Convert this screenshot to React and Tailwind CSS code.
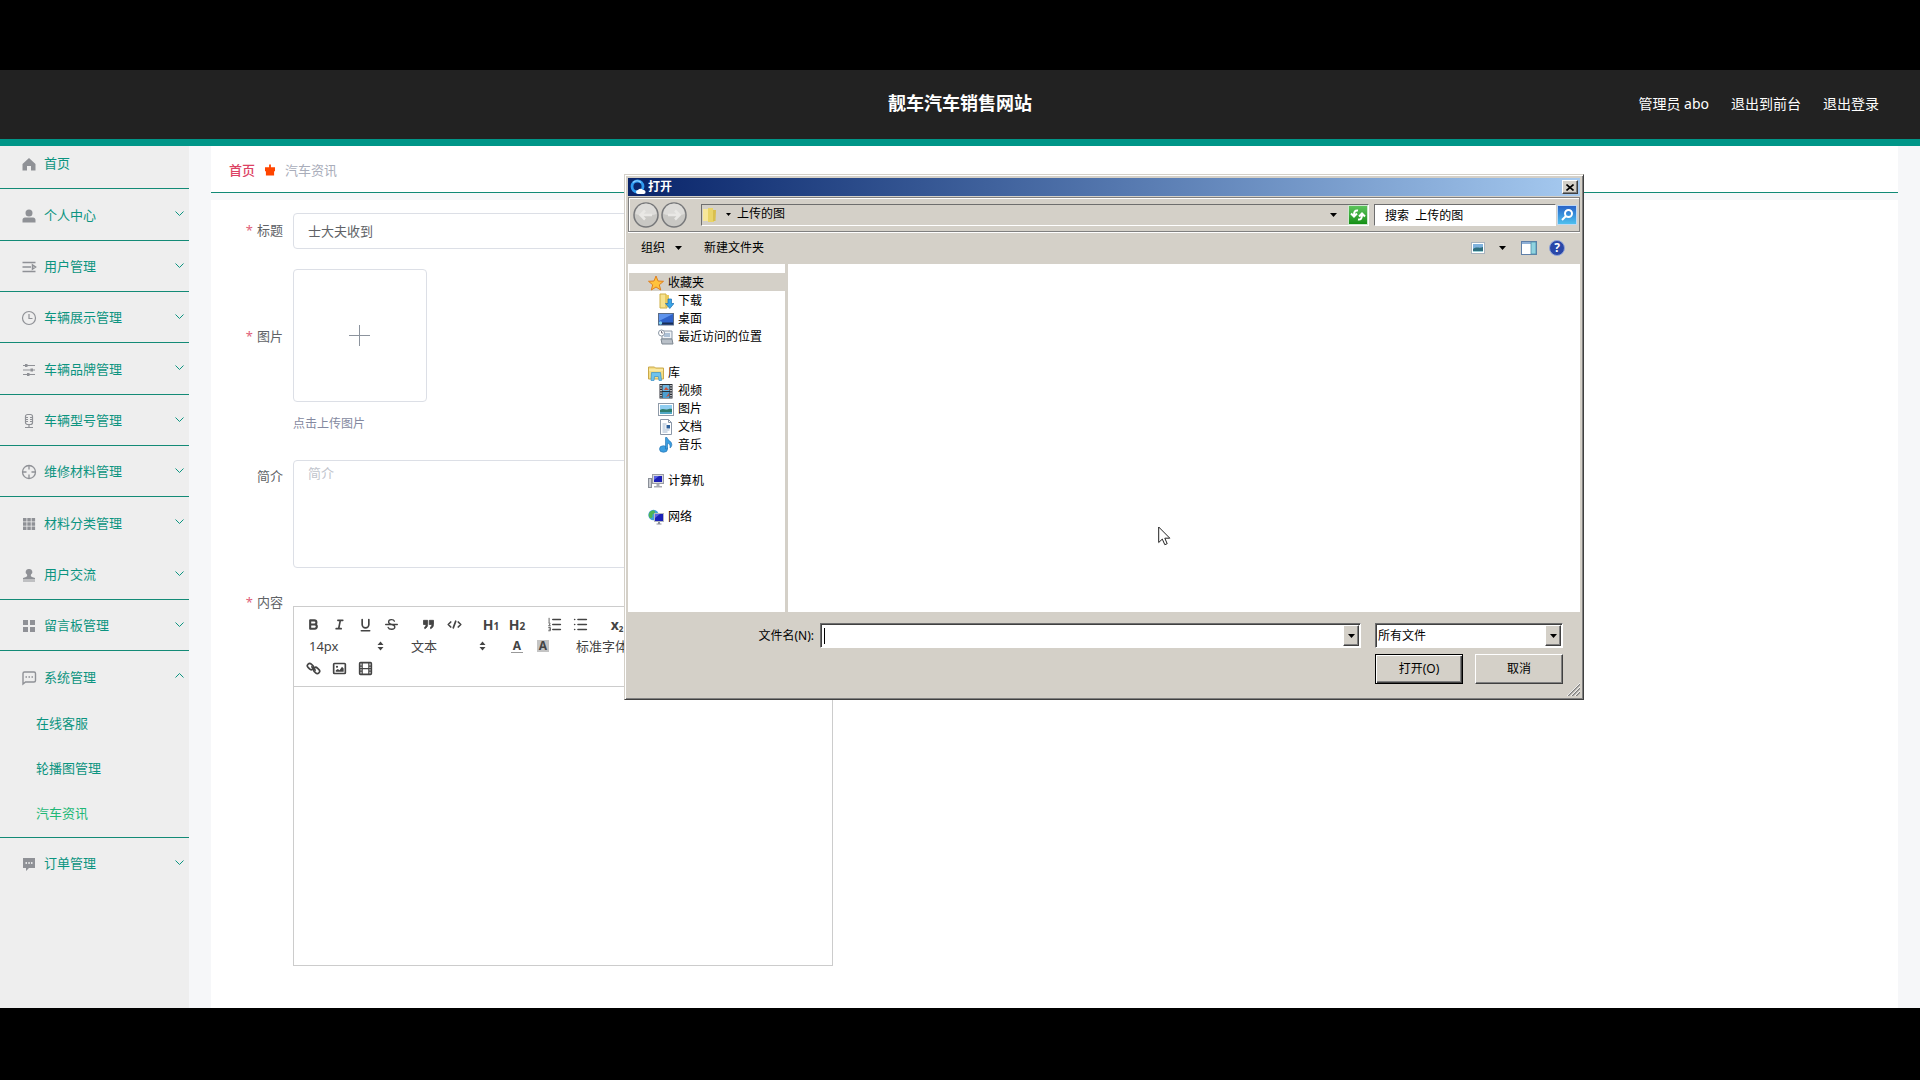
import { useState } from 'react';

/* ---------- sidebar icons ---------- */

const Svg = ({ size = 16, box = 16, children }) => (
  <svg width={size} height={size} viewBox={`0 0 ${box} ${box}`} className="shrink-0" fill="none" aria-hidden="true">
    {children}
  </svg>
);

const menuIcons = {
  home: <path d="M8 2 1.500 8v6.500H6V10h4v4.500h4.500V8Z" fill="#8f9196" />,
  user: <path d="M8 1.500a3.500 3.500 0 1 0 0 7 3.500 3.500 0 0 0 0-7ZM1.500 14.500V12c0-1.500 1-2.500 2.500-2.500h8c1.500 0 2.500 1 2.500 2.500v2.500Z" fill="#8f9196" />,
  fold: <path d="M1.500 3.500h13M1.500 8H10M1.500 12.500h13M11.500 6v4l3-2Z" stroke="#8f9196" strokeWidth="1.500" />,
  clock: (
    <g stroke="#8f9196" strokeWidth="1.200">
      <circle cx="8" cy="8" r="6.500" />
      <path d="M8 4v4.500h3.500" />
    </g>
  ),
  sliders: (
    <g>
      <path d="M2 3.500h12M2 8h12M2 12.500h12" stroke="#8f9196" strokeWidth="1.200" />
      <path d="M4 2h2.500v3H4ZM9.500 6.500H12v3H9.500ZM6 11h2.500v3H6Z" fill="#8f9196" />
    </g>
  ),
  mic: (
    <g stroke="#8f9196" strokeWidth="1.200">
      <rect x="4.500" y="1.500" width="7" height="10" rx="2" />
      <path d="M5 4.500h2M9 4.500h2M5 6.500h2M9 6.500h2M5 8.500h2M9 8.500h2M8 11.500v3M4 14.500h8" />
    </g>
  ),
  aim: (
    <g stroke="#8f9196" strokeWidth="1.300">
      <circle cx="8" cy="8" r="6.500" />
      <path d="M8 1.500v4M8 10.500v4M1.500 8h4M10.500 8h4" />
    </g>
  ),
  grid9: <path d="M2 2h3.500v3.500H2ZM6.300 2h3.500v3.500H6.300ZM10.600 2h3.500v3.500h-3.500ZM2 6.300h3.500v3.500H2ZM6.300 6.300h3.500v3.500H6.300ZM10.600 6.300h3.500v3.500h-3.500ZM2 10.600h3.500v3.500H2ZM6.300 10.600h3.500v3.500H6.300ZM10.600 10.600h3.500v3.500h-3.500Z" fill="#8f9196" />,
  stamp: <path d="M8 2a3 3 0 0 0-2 5.500c.5 1.500 0 2-1 2.500l-3 1v1.500h12V11l-3-1c-1-.500-1.500-1-1-2.500A3 3 0 0 0 8 2ZM2 13.500h12v1H2Z" fill="#8f9196" />,
  grid4: <path d="M2 2h5v5H2ZM9 2h5v5H9ZM2 9h5v5H2ZM9 9h5v5H9Z" fill="#8f9196" />,
  chat: (
    <g stroke="#8f9196" strokeWidth="1.400">
      <path d="M2 14V3.500C2 2.500 2.500 2 3.500 2h9.500c1 0 1.500.5 1.500 1.500v7c0 1-.5 1.500-1.500 1.500H4.500Z" />
      <path d="M4.500 7h1.500M7.500 7H9M10.500 7H12" />
    </g>
  ),
  chatSolid: (
    <g>
      <path d="M2 2h12v10H8l-3 3v-3H2Z" fill="#8f9196" />
      <path d="M4.500 7H6M7.300 7h1.500M10 7h1.500" stroke="#fff" strokeWidth="1.500" />
    </g>
  ),
};

const menu = [
  { name: '个人中心', icon: 'user' },
  { name: '用户管理', icon: 'fold' },
  { name: '车辆展示管理', icon: 'clock' },
  { name: '车辆品牌管理', icon: 'sliders' },
  { name: '车辆型号管理', icon: 'mic' },
  { name: '维修材料管理', icon: 'aim' },
  { name: '材料分类管理', icon: 'grid9', noLine: true },
  { name: '用户交流', icon: 'stamp' },
  { name: '留言板管理', icon: 'grid4' },
  { name: '系统管理', icon: 'chat', children: ['在线客服', '轮播图管理', '汽车资讯'] },
  { name: '订单管理', icon: 'chatSolid', noLine: true },
];

function Sidebar() {
  const [open, setOpen] = useState('系统管理');

  return (
    <nav className="w-[189px] shrink-0 bg-[#eeeeee] text-[13px] text-[#0b9480]">
      <ul>
        <li className="border-b border-[#128a76]">
          <a href="#home" className="flex h-[42px] items-center gap-[7px] pb-[6px] pl-[21px]">
            <Svg>{menuIcons.home}</Svg>
            首页
          </a>
        </li>
        {menu.map((item) => (
          <li
            key={item.name}
            className={`group border-b ${item.noLine ? 'border-transparent' : 'border-[#128a76]'}`}
          >
            <button
              type="button"
              onClick={() => setOpen(open === item.name ? '' : item.name)}
              className="flex h-[50px] w-full items-center gap-[7px] pt-[2px] pr-[5px] pl-[21px] group-[:nth-child(3n+2)]:h-[51px]"
            >
              <Svg>{menuIcons[item.icon]}</Svg>
              <span className="flex-1 text-left">{item.name}</span>
              <svg width="9" height="5" viewBox="0 0 9 5" className="mb-1" fill="none" stroke="#0b9480">
                <path d={open === item.name ? 'M.5 4.500l4-4 4 4' : 'M.5.5l4 4 4-4'} />
              </svg>
            </button>
            {item.children && open === item.name && (
              <ul>
                {item.children.map((child) => (
                  <li key={child}>
                    <a
                      href={`#${child}`}
                      className={`flex h-[45px] items-center pb-[2px] pl-9 ${child === '汽车资讯' ? 'text-[#1fb877]' : ''}`}
                    >
                      {child}
                    </a>
                  </li>
                ))}
              </ul>
            )}
          </li>
        ))}
      </ul>
    </nav>
  );
}

/* ---------- rich text editor ---------- */

const S = { stroke: '#444', strokeWidth: 2, strokeLinecap: 'round', strokeLinejoin: 'round', fill: 'none' };

const editorIcons = {
  bold: <path {...S} strokeWidth="2.500" d="M5 4h5a2.500 2.500 0 0 1 0 5H5ZM5 9h5.500a2.500 2.500 0 0 1 0 5H5Z" />,
  italic: <path {...S} d="M7 4h6M5 14h6M8 14l2-10" />,
  underline: <path {...S} d="M5 3v6a4 4 0 0 0 8 0V3M4 16.500h10" />,
  strike: <path {...S} strokeWidth="1.600" d="M2 9h14M12.500 5C11.500 2.500 5.500 2.500 5.500 6c0 4 7.500 2 7.500 6 0 3.500-7 3.500-8 .5" />,
  quote: <path fill="#444" stroke="#444" d="M3 4h5v5c0 2-1 4-3.500 5v-2C6 11 6 10 6 9H3ZM10 4h5v5c0 2-1 4-3.500 5v-2c1.500-1 1.500-2 1.500-3h-3Z" />,
  code: <path {...S} d="M4.500 6 1.500 9l3 3M13.500 6l3 3-3 3M10.500 5l-3 8" />,
  ordered: (
    <g>
      <path {...S} d="M7 3h9M7 9h9M7 15h9" />
      <path {...S} strokeWidth="1" d="M2.500 1.500v4M2 7h1.500v1.500L2 10.500h2M2 12.500h2v4H2M2.500 14.500H4" />
    </g>
  ),
  bullet: <path {...S} d="M6 3h10M6 9h10M6 15h10M2 3h.01M2 9h.01M2 15h.01" />,
  link: (
    <g>
      <path {...S} d="m7 7 4 4" />
      <rect {...S} x="1.500" y="4" width="8" height="5.500" rx="2.700" transform="rotate(45 5.500 6.500)" />
      <rect {...S} x="8.500" y="8.500" width="8" height="5.500" rx="2.700" transform="rotate(45 12.500 11.500)" />
    </g>
  ),
  image: (
    <g>
      <rect {...S} x="2" y="3" width="14" height="12" rx="1" />
      <circle cx="6" cy="7" r="1.300" fill="#444" />
      <path fill="#444" d="M4.500 13v-2L7 9.500 9 11l3-4 2 2v4Z" />
    </g>
  ),
  video: (
    <g>
      <rect {...S} x="2" y="2" width="14" height="14" rx="1" />
      <path {...S} strokeWidth="1.500" d="M5 2v14M13 2v14M5 9h8M2 6h3M2 9h3M2 12h3M13 6h3M13 9h3M13 12h3" />
    </g>
  ),
};

const ToolButton = ({ name, children }) => (
  <button type="button" aria-label={name} className="flex w-[26px] items-center justify-center text-[#444]">
    {children || (
      <Svg size={15} box={18}>
        {editorIcons[name]}
      </Svg>
    )}
  </button>
);

const ToolSelect = ({ label, value }) => (
  <span className="relative flex w-[91px] items-center text-[#444]">
    <select aria-label={label} className="w-full appearance-none truncate bg-transparent pl-[9px] text-[13px] leading-5">
      <option>{value}</option>
    </select>
    <svg width="7" height="10" viewBox="0 0 7 10" className="pointer-events-none absolute right-[7px]">
      <path d="M.5 4 3.500.5l3 3.500ZM.5 6l3 3.500 3-3.500Z" fill="#444" />
    </svg>
  </span>
);

function Editor() {
  return (
    <div className="w-[540px] border border-[#cccccc]">
      <div className="flex flex-col overflow-hidden border-b border-[#cccccc] px-[6px] pt-[6px] pb-[7px]">
        <div className="flex h-[22px] gap-[11px]">
          <div className="flex">
            <ToolButton name="bold" />
            <ToolButton name="italic" />
            <ToolButton name="underline" />
            <ToolButton name="strike" />
          </div>
          <div className="flex">
            <ToolButton name="quote" />
            <ToolButton name="code" />
          </div>
          <div className="flex text-[14px] font-bold">
            <ToolButton name="h1"><span>H<span className="text-[10px]">1</span></span></ToolButton>
            <ToolButton name="h2"><span>H<span className="text-[10px]">2</span></span></ToolButton>
          </div>
          <div className="flex">
            <ToolButton name="ordered" />
            <ToolButton name="bullet" />
          </div>
          <div className="flex text-[14px] font-bold">
            <ToolButton name="sub"><span>x<sub className="text-[8px]">2</sub></span></ToolButton>
            <ToolButton name="super"><span>x<sup className="text-[8px]">2</sup></span></ToolButton>
          </div>
        </div>
        <div className="flex h-[22px] gap-[11px]">
          <ToolSelect label="字号" value="14px" />
          <ToolSelect label="段落" value="文本" />
          <div className="flex text-[12px] leading-3 font-bold">
            <ToolButton name="color"><span className="border-b border-[#999] px-[2px]">A</span></ToolButton>
            <ToolButton name="background"><span className="bg-[#c4c4c4] px-[2px]">A</span></ToolButton>
          </div>
          <ToolSelect label="字体" value="标准字体" />
        </div>
        <div className="flex h-[22px]">
          <ToolButton name="link" />
          <ToolButton name="image" />
          <ToolButton name="video" />
        </div>
      </div>
      <div
        role="textbox"
        aria-labelledby="content-label"
        contentEditable
        suppressContentEditableWarning
        className="h-[278px] p-3 text-[13px] outline-none"
      />
    </div>
  );
}

/* ---------- form ---------- */

const Label = ({ required, id, htmlFor, className, children }) => (
  <label id={id} htmlFor={htmlFor} className={`w-[72px] shrink-0 text-right text-[13px] text-[#606266] ${className}`}>
    {required && <span className="mr-1 text-[#e0607a]">*</span>}
    {children}
  </label>
);

function NewsForm() {
  return (
    <form className="flex flex-1 flex-col bg-white pt-[13px]">
      <div className="mb-5 flex gap-[10px]">
        <Label required htmlFor="title" className="leading-[34px]">标题</Label>
        <input
          id="title"
          defaultValue="士大夫收到"
          className="h-9 w-[540px] rounded border border-[#dcdfe6] px-[14px] pb-[2px] text-[13px] text-[#606266] outline-none"
        />
      </div>

      <div className="mb-[25px] flex gap-[10px]">
        <Label required htmlFor="upload" className="leading-[134px]">图片</Label>
        <div>
          <button
            id="upload"
            type="button"
            className="flex h-[133px] w-[134px] items-center justify-center rounded border border-[#dcdfe6] pr-[1px] pb-[1px]"
          >
            <svg width="21" height="21" viewBox="0 0 21 21" stroke="#8c939d">
              <path d="M10.500 0v21M0 10.500h21" />
            </svg>
          </button>
          <p className="mt-[11px] text-[12px] leading-[22px] text-[#8489a0]">点击上传图片</p>
        </div>
      </div>

      <div className="mb-[38px] flex gap-[10px]">
        <Label htmlFor="intro" className="leading-8">简介</Label>
        <textarea
          id="intro"
          placeholder="简介"
          className="h-[108px] w-[540px] resize-none rounded border border-[#dcdfe6] px-[14px] py-[2px] text-[13px] leading-5 outline-none placeholder:text-[#c0c4cc]"
        />
      </div>

      <div className="flex gap-[10px]">
        <Label required id="content-label" className="-mt-[14px] leading-[20px]">内容</Label>
        <Editor />
      </div>
    </form>
  );
}

/* ---------- file dialog ---------- */

const Caret = () => (
  <svg width="7" height="4" viewBox="0 0 7 4" className="shrink-0">
    <path d="M0 0h7L3.500 4Z" fill="#000" />
  </svg>
);

const treeIcons = {
  star: <path d="m8 1 2 5 5.500.3-4.200 3.500 1.400 5.200L8 12l-4.700 3 1.400-5.200L.5 6.300 6 6Z" fill="#ffc23c" stroke="#e07f1e" strokeWidth="1" />,
  download: (
    <g>
      <path d="M2 1h6l1 14H2Z" fill="#f6e28e" stroke="#cfae45" />
      <path d="M7 2h4v12H7Z" fill="#e8c95c" />
      <path d="M10 6h3.500v4.500H16L11.800 15.500 7.500 10.500H10Z" fill="#3aa5e6" stroke="#1b6fb5" strokeWidth=".7" />
    </g>
  ),
  desktop: (
    <g>
      <rect x=".5" y="2.500" width="15" height="11.500" fill="#2f62c9" stroke="#5a6b85" />
      <path d="M1 3h14L1 10Z" fill="#5e93ec" />
      <path d="M1 12.500h14" stroke="#1a2f55" strokeWidth="2" />
      <circle cx="2.500" cy="12" r="1.700" fill="#7fd0f0" />
    </g>
  ),
  recent: (
    <g>
      <path d="M4 2h10v8H4Z" fill="#eef2f6" stroke="#8b97a5" />
      <path d="M6 5h6M6 7h6" stroke="#6d8fb5" />
      <path d="M3 10h11l1 5H4Z" fill="#b9c0c8" stroke="#7d8791" />
      <circle cx="3.500" cy="4" r="3" fill="#fff" stroke="#8b97a5" />
      <path d="M3.500 2v2H5" stroke="#556" strokeWidth=".8" />
    </g>
  ),
  library: (
    <g>
      <path d="M.5 3V2h6l1 1h8v11H.5Z" fill="#f4dd84" stroke="#c9a84a" />
      <path d="M1 5h14" stroke="#fff3c0" />
      <path d="M3 15.500 3.500 7.500h9l1 8H11l-.7-4H6.500L6 15.500Z" fill="#6ec3ee" stroke="#3a8fc4" strokeWidth=".7" />
    </g>
  ),
  video: (
    <g>
      <rect x="1.500" y="1" width="13" height="14.500" fill="#2c2f36" />
      <path d="M4.500 2h7v6h-7Z" fill="#6fb5de" />
      <path d="M4.500 9h7v6h-7Z" fill="#4d9fd0" />
      <path d="m6 7 2-3 3 3ZM8 14l3-4v3Z" fill="#c7523c" />
      <path d="M3 2v13M13 2v13" stroke="#fff" strokeWidth="1.300" strokeDasharray="1.300 1.200" />
    </g>
  ),
  picture: (
    <g>
      <rect x=".5" y="2.500" width="15" height="12" fill="#fff" stroke="#8f9aa8" />
      <path d="M2 4h12v9H2Z" fill="#8fcdf0" />
      <path d="M2 9c3-2 5 0 7-.5s3-1 5-.5v5H2Z" fill="#2f7d6d" />
      <path d="M2 11h12v2H2Z" fill="#4fa7c4" />
    </g>
  ),
  doc: (
    <g>
      <path d="M2.500.5h8l3 3v12h-11Z" fill="#fff" stroke="#8b97a8" />
      <path d="M10.500.5v3h3" stroke="#8b97a8" />
      <path d="M4.500 5h4M4.500 7h3M4.500 9h3M4.500 11h7M4.500 13h5" stroke="#9fb4cc" />
      <path d="M8.500 6h3.500v3.500H8.500Z" fill="#2c5f9a" />
    </g>
  ),
  music: (
    <g>
      <ellipse cx="5.500" cy="12" rx="4" ry="3.300" fill="#3b9ee0" stroke="#1f6fb0" strokeWidth=".6" />
      <path d="M7.500 12V.5H9c.5 3 4.800 3.500 4.800 7 0 1.700-.6 2.700-1.800 3.500.6-3-.5-4.200-2.500-4.700V12Z" fill="#3b9ee0" stroke="#1f6fb0" strokeWidth=".6" />
    </g>
  ),
  computer: (
    <g>
      <rect x=".5" y="5.500" width="3" height="9" fill="#c9ccd2" stroke="#8a8f98" />
      <rect x="4.500" y="1.500" width="11" height="9" fill="#d8d9dd" stroke="#9a9da5" />
      <path d="M6 3h8v6H6Z" fill="#1b1fb5" />
      <path d="M6 3h5L6 7Z" fill="#5a62e0" />
      <path d="M8.500 11h3v2h2.500v1.500H6V13h2.500Z" fill="#a9acb3" />
    </g>
  ),
  network: (
    <g>
      <circle cx="5.500" cy="6" r="5.200" fill="#3f9fd8" />
      <path d="M2 3c2-2 5-2 5 0S4 4.500 4.500 6.500 3 9.500 2 9 0 5 2 3Z" fill="#4fb552" />
      <rect x="6.500" y="4.500" width="9" height="8" fill="#1b22b8" stroke="#b4b8c2" />
      <path d="M7 5h5L7 9Z" fill="#5a62e0" />
      <path d="M10 13h2v1.500h1.500v1h-5v-1H10Z" fill="#8b909b" />
    </g>
  ),
};

const tree = [
  { name: '收藏夹', icon: 'star', selected: true, children: [['下载', 'download'], ['桌面', 'desktop'], ['最近访问的位置', 'recent']] },
  { name: '库', icon: 'library', children: [['视频', 'video'], ['图片', 'picture'], ['文档', 'doc'], ['音乐', 'music']] },
  { name: '计算机', icon: 'computer', children: [] },
  { name: '网络', icon: 'network', children: [] },
];

const RoundArrow = ({ label, d }) => (
  <button type="button" aria-label={label}>
    <svg width="26" height="26" viewBox="0 0 26 26" fill="none" className="block">
      <circle cx="13" cy="13" r="12" fill="#c9c8c4" stroke="#77787a" strokeWidth="1.500" />
      <path d="M2.500 12a10.500 10.500 0 0 1 21 0c-6 2-15 2-21 0Z" fill="#dddcd9" />
      <path d={d} stroke="#e9e8e5" strokeWidth="2.500" />
    </svg>
  </button>
);

const raised = 'border border-t-white border-l-white border-r-[#404040] border-b-[#404040] bg-[#d4d0c8] shadow-[inset_-1px_-1px_0_#808080]';
const sunken = 'border border-t-[#6e6e6e] border-l-[#6e6e6e] border-r-white border-b-white';

function FileDialog() {
  return (
    <section
      role="dialog"
      aria-labelledby="dialog-title"
      className="absolute top-[174px] left-[624px] flex h-[526px] w-[960px] flex-col border border-t-[#d4d0c8] border-r-[#404040] border-b-[#404040] border-l-[#d4d0c8] bg-[#d4d0c8] p-[3px] text-[12px] leading-4 text-black shadow-[inset_1px_1px_0_#ffffff,inset_-1px_-1px_0_#808080]"
    >
      <header className="flex h-[18px] shrink-0 items-center gap-[2px] bg-linear-to-r from-[#0a246a] to-[#a6caf0] pr-[2px] pl-[2px] font-bold text-white">
        <Svg>
          <circle cx="7.500" cy="7.500" r="5.500" stroke="#2f9bf0" strokeWidth="2.800" />
          <path d="M3 3.500a6 6 0 0 1 8 0" stroke="#8fd0ff" strokeWidth="1.200" />
          <path d="M8 15a2 2 0 0 1 0-4 3 3 0 0 1 5 0 2 2 0 0 1 1 4Z" fill="#fff" />
        </Svg>
        <h2 id="dialog-title" className="flex-1">打开</h2>
        <button type="button" aria-label="关闭" className={`flex h-[14px] w-4 items-center justify-center ${raised}`}>
          <svg width="8" height="7" viewBox="0 0 8 7" stroke="#000" strokeWidth="1.600">
            <path d="m.5.5 7 6M7.500.5l-7 6" />
          </svg>
        </button>
      </header>

      <div className="mt-[1px] flex h-[35px] shrink-0 items-center border border-[#808080] pr-[2px] pl-1 shadow-[inset_1px_1px_0_#ffffff,0_1px_0_#ffffff]">
        <div className="flex gap-[2px] rounded-full">
          <RoundArrow label="后退" d="M19 13H8M12 8.500 7.500 13l4.500 4.500" />
          <RoundArrow label="前进" d="M7 13h11M14 8.500l4.500 4.500-4.500 4.500" />
        </div>
        <div className={`ml-[14px] flex h-[22px] min-w-0 flex-1 items-center ${sunken}`}>
          <Svg>
            <path d="M1 2h5l1 12H1Z" fill="#f7e79a" />
            <path d="M6 1h5l1 14H6Z" fill="#e9d468" />
            <path d="M11 3h3l-.5 11H11Z" fill="#d9bf4d" />
          </Svg>
          <svg width="5" height="3" viewBox="0 0 5 3" className="mr-[6px] ml-[8px]">
            <path d="M0 0h5L2.500 3Z" fill="#000" />
          </svg>
          <span className="flex-1 pb-[1px]">上传的图</span>
          <button type="button" aria-label="历史位置" className="mr-[11px]"><Caret /></button>
          <button
            type="button"
            aria-label="刷新"
            className="flex h-5 w-5 items-center justify-center border border-[#cfe8cf] bg-linear-to-b from-[#5cc45c] to-[#129012]"
          >
            <svg width="16" height="14" viewBox="0 0 16 14" fill="none" stroke="#fff" strokeWidth="2">
              <path d="M8 2.500C5 2 4 4 4 7M1 5.500l3 3 3-3M8 11.500c3 .5 4-1.500 4-4.500M9 8.500l3-3 3 3" />
            </svg>
          </button>
        </div>
        <input
          aria-label="搜索"
          defaultValue="搜索  上传的图"
          className={`ml-[5px] h-[22px] w-[182px] bg-white pl-[10px] outline-none ${sunken}`}
        />
        <button
          type="button"
          aria-label="开始搜索"
          className="ml-[1px] flex h-5 w-5 items-center justify-center border border-[#bcd8f5] bg-linear-to-b from-[#2a63c8] to-[#4fc0ee]"
        >
          <svg width="14" height="14" viewBox="0 0 14 14" fill="none" stroke="#fff" strokeWidth="2">
            <circle cx="8.500" cy="5.500" r="3.500" />
            <path d="m6 8-4 4" />
          </svg>
        </button>
      </div>

      <div className="flex h-[32px] shrink-0 items-center pr-[15px] pl-[13px]">
        <button type="button" className="flex items-center gap-[10px]">
          组织
          <Caret />
        </button>
        <button type="button" className="ml-[22px]">新建文件夹</button>
        <div className="ml-auto flex items-center">
          <button type="button" aria-label="视图" className="flex items-center gap-[14px]">
            <svg width="14" height="12" viewBox="0 0 14 12">
              <rect x=".5" y=".5" width="13" height="11" fill="#fff" stroke="#aab4bf" />
              <path d="M2 2h10v8H2Z" fill="#7fb2dd" />
              <path d="M2 7c4-3 6 0 10-2v5H2Z" fill="#2f6f7f" />
              <path d="M2 9h10v1H2Z" fill="#9fd3d8" />
            </svg>
            <Caret />
          </button>
          <button type="button" aria-label="预览窗格" className="ml-[15px]">
            <svg width="16" height="14" viewBox="0 0 16 14" className="block">
              <rect x=".5" y=".5" width="15" height="13" fill="#fff" stroke="#5f7fa8" />
              <path d="M1 2h14" stroke="#8fb0d6" strokeWidth="2" />
              <path d="M10 1h5v12h-5Z" fill="#8fd3e0" stroke="#4f8fa8" strokeWidth=".8" />
            </svg>
          </button>
          <button type="button" aria-label="帮助" className="ml-[12px] flex h-4 w-4 items-center justify-center rounded-full border border-[#8fa3d8] bg-[#2a47a8] font-bold text-white">
            ?
          </button>
        </div>
      </div>

      <div className="flex h-[348px] min-h-0 shrink-0 bg-white">
        <ul className="w-[157px] shrink-0 pt-[9px] pl-[1px]">
          {tree.map((node) => (
            <li key={node.name} className="mb-[18px]">
              <div className={`flex h-[18px] items-center gap-1 pt-[1px] pl-[19px] ${node.selected ? 'bg-[#d4d0c8]' : ''}`}>
                <Svg>{treeIcons[node.icon]}</Svg>
                {node.name}
              </div>
              {node.children.length > 0 && (
                <ul>
                  {node.children.map(([name, icon]) => (
                    <li key={name} className="flex h-[18px] items-center gap-1 pt-[1px] pl-[29px]">
                      <Svg>{treeIcons[icon]}</Svg>
                      {name}
                    </li>
                  ))}
                </ul>
              )}
            </li>
          ))}
        </ul>
        <div className="w-[3px] bg-[#d4d0c8]" />
      </div>

      <div className="flex flex-1 justify-end gap-[14px] pt-[11px] pr-[17px]">
        <div className="flex h-[25px] items-center gap-[6px]">
          <label htmlFor="filename">文件名(N):</label>
          <div className={`flex h-[25px] w-[541px] items-center bg-white p-[1px] shadow-[inset_1px_1px_0_#404040] ${sunken}`}>
            {/* text cursor */}
            <span className="ml-[2px] h-4 w-px bg-black" />
            <input id="filename" className="min-w-0 flex-1 outline-none" />
            <button type="button" aria-label="展开" className={`flex w-4 items-center justify-center self-stretch ${raised}`}>
              <Caret />
            </button>
          </div>
        </div>
        <div className="flex w-[188px] flex-col gap-[6px]">
          <div className={`flex h-[25px] bg-white p-[1px] shadow-[inset_1px_1px_0_#404040] ${sunken}`}>
            <select aria-label="文件类型" className="flex-1 appearance-none pl-[1px] outline-none">
              <option>所有文件</option>
            </select>
            <span className={`flex w-4 items-center justify-center ${raised}`}>
              <Caret />
            </span>
          </div>
          <div className="flex justify-between">
            <button type="button" className="h-[30px] w-[88px] border border-black bg-[#d4d0c8] shadow-[inset_1px_1px_0_#ffffff,inset_-1px_-1px_0_#404040,inset_-2px_-2px_0_#808080]">
              打开(O)
            </button>
            <button type="button" className={`h-[30px] w-[88px] ${raised}`}>取消</button>
          </div>
        </div>
      </div>

      <svg width="13" height="13" viewBox="0 0 13 13" className="absolute right-[3px] bottom-[3px]">
        <path d="M1 13 13 1M5 13l8-8M9 13l4-4" stroke="#808080" strokeWidth="1.500" />
        <path d="M0 13 13 0M4 13l9-9M8 13l5-5" stroke="#fff" strokeWidth=".8" />
      </svg>
    </section>
  );
}

export default function App() {
  return (
    <div className="relative flex min-h-screen flex-col bg-black pt-[70px] pb-[72px] font-['Noto_Sans','Noto_Sans_CJK_SC',sans-serif]">
      <header className="grid h-[76px] shrink-0 grid-cols-3 items-center border-b-[7px] border-[#009688] bg-[#222222] px-[41px] pb-[2px] text-[14px] text-white">
        <h1 className="col-start-2 text-center text-[18px] font-bold">靓车汽车销售网站</h1>
        <div className="flex justify-end gap-[22px]">
          <span>管理员 abo</span>
          <a href="#front">退出到前台</a>
          <a href="#logout">退出登录</a>
        </div>
      </header>

      <div className="flex flex-1 bg-[#f6f7f9]">
        <Sidebar />
        <main className="mr-[22px] ml-[22px] flex min-w-0 flex-1 flex-col">
          <div className="mb-[7px] flex h-[47px] items-center gap-[10px] border-b border-[#128a76] bg-white pt-[2px] pl-[18px] text-[13px] leading-5">
            <a href="#home" className="font-medium text-[#dc4264]">首页</a>
            <svg width="10" height="14" viewBox="0 0 11 14" fill="#ff4500">
              <path d="M4.500 1h2v3H11v4.500h-1v4.500H1V8.500H0V4h4.500Z" />
            </svg>
            <span className="text-[#a9adba]">汽车资讯</span>
          </div>
          <NewsForm />
        </main>
      </div>

      <FileDialog />

      <svg width="13" height="20" viewBox="0 0 13 20" className="absolute top-[526px] left-[1158px]">
        <path d="M.7 1v15.500l3.600-3.400 2.500 5.600 2.400-1-2.400-5.500h5Z" fill="#fff" stroke="#222" />
      </svg>
    </div>
  );
}
